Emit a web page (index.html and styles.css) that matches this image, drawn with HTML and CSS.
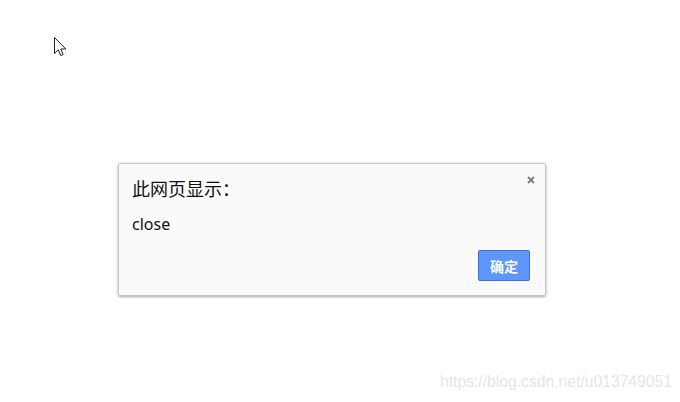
FILE: index.html
```html
<!DOCTYPE html>
<html lang="zh-CN">
<head>
<meta charset="utf-8">
<title>此网页显示</title>
<link rel="stylesheet" href="styles.css">
</head>
<body>
<div class="page">
  <svg class="cursor" width="14" height="21" viewBox="0 0 14 21" aria-hidden="true">
    <path d="M0.5 0.5 L0.5 16.5 L4.3 12.8 L6.8 18.6 L9.2 17.6 L6.8 12 L11.8 12 Z" fill="#ffffff" stroke="#222" stroke-width="1" stroke-linejoin="miter"/>
  </svg>
  <div class="dialog">
    <svg class="close" width="8" height="8" viewBox="0 0 8 8" aria-hidden="true">
      <path d="M1 1 L7 7 M7 1 L1 7" stroke="#7a7a7a" stroke-width="1.8"/>
    </svg>
    <div class="title">此网页显示：</div>
    <div class="message">close</div>
    <div class="actions">
      <button class="ok">确定</button>
    </div>
  </div>
  <div class="watermark">https://blog.csdn.net/u013749051</div>
</div>
</body>
</html>
```

FILE: styles.css
```css
html, body {
  margin: 0;
  padding: 0;
  background: #ffffff;
}
.page {
  position: relative;
  width: 680px;
  height: 402px;
  padding: 163px 0 0 118px;
  box-sizing: border-box;
  font-family: "Noto Sans", "Noto Sans CJK SC", sans-serif;
}
.cursor {
  position: absolute;
  left: 54px;
  top: 37px;
}
.dialog {
  position: relative;
  width: 428px;
  box-sizing: border-box;
  background: #fafafa;
  border: 1px solid #c6c6c6;
  border-radius: 2px;
  box-shadow: 0 1px 3px rgba(0, 0, 0, 0.35);
  padding: 13px 15px 14px 13px;
  display: flex;
  flex-direction: column;
}
.close {
  position: absolute;
  right: 10px;
  top: 12px;
}
.title {
  font-family: "Noto Sans CJK SC", sans-serif;
  font-size: 18px;
  line-height: 22px;
  color: #111;
}
.message {
  margin-top: 15px;
  font-size: 16px;
  line-height: 20px;
  color: #111;
}
.actions {
  margin-top: 16px;
  display: flex;
  justify-content: flex-end;
}
.ok {
  width: 52px;
  height: 31px;
  box-sizing: border-box;
  background: #5e96fd;
  border: 1px solid #3a72d6;
  border-radius: 2px;
  color: #ffffff;
  font-family: "Noto Sans CJK SC", sans-serif;
  font-weight: bold;
  font-size: 14px;
  padding: 0;
}
.watermark {
  position: absolute;
  right: 8px;
  bottom: 11px;
  font-family: "Liberation Sans", Arial, sans-serif;
  font-size: 15.7px;
  color: #e6e6e6;
}
```
